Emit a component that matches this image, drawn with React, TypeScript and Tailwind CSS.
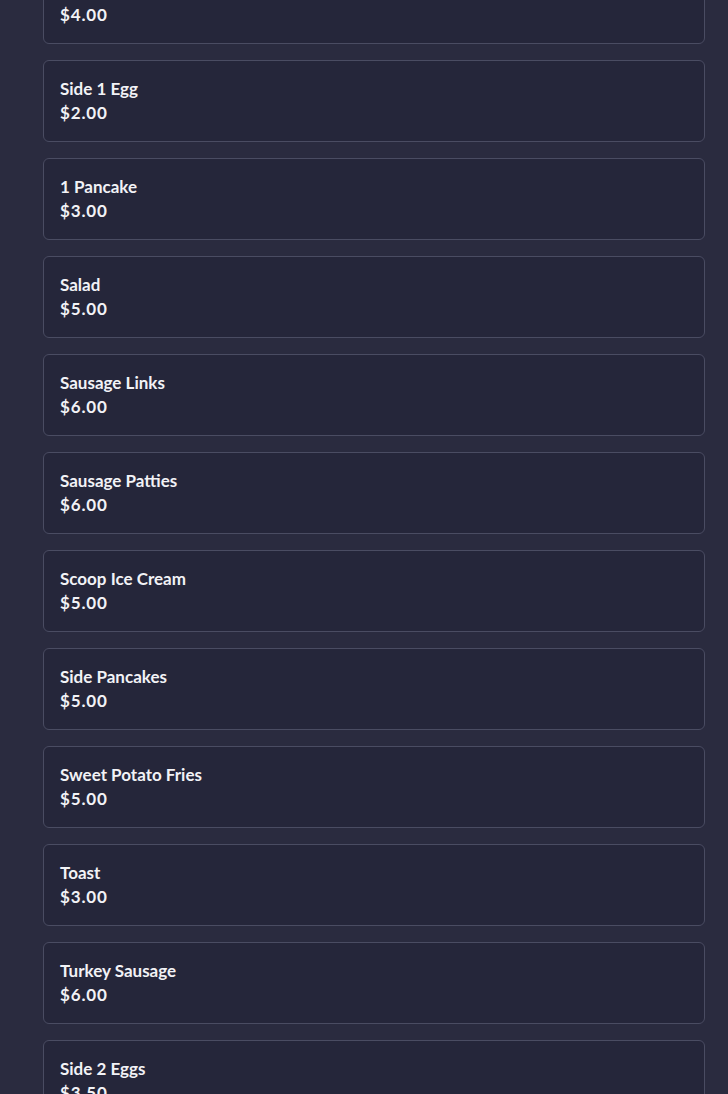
const items = [
  { name: 'Side Bacon', price: '$4.00' },
  { name: 'Side 1 Egg', price: '$2.00' },
  { name: '1 Pancake', price: '$3.00' },
  { name: 'Salad', price: '$5.00' },
  { name: 'Sausage Links', price: '$6.00' },
  { name: 'Sausage Patties', price: '$6.00' },
  { name: 'Scoop Ice Cream', price: '$5.00' },
  { name: 'Side Pancakes', price: '$5.00' },
  { name: 'Sweet Potato Fries', price: '$5.00' },
  { name: 'Toast', price: '$3.00' },
  { name: 'Turkey Sausage', price: '$6.00' },
  { name: 'Side 2 Eggs', price: '$3.50' },
];

export default function App() {
  return (
    <div
      className="h-[1094px] overflow-hidden bg-[#2a2b3f] text-[#f2f2f6]"
      style={{ fontFamily: 'Lato, "Open Sans", sans-serif' }}
    >
      {/* Lista de itens */}
      <ul className="-mt-[38px] flex flex-col gap-4 pl-[43px] pr-[23px]">
        {items.map((item) => (
          <li
            key={item.name}
            className="rounded-md border border-[#4a4c62] bg-[#25263a] px-4 py-4"
          >
            <p className="text-[17px] font-bold leading-6">{item.name}</p>
            <p className="text-[17px] font-bold leading-6 tracking-[0.05em]">
              {item.price}
            </p>
          </li>
        ))}
      </ul>
    </div>
  );
}
